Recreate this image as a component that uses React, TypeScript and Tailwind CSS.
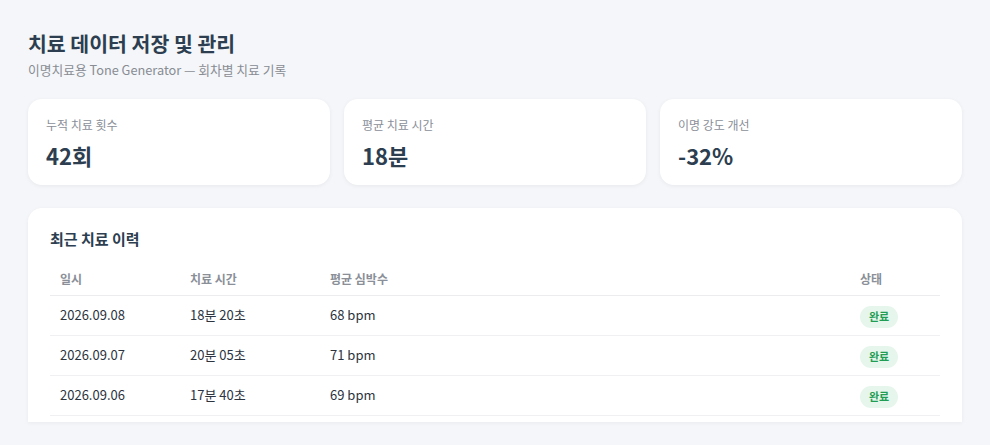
import React from 'react';

const stats = [
    { label: '누적 치료 횟수', value: '42회' },
    { label: '평균 치료 시간', value: '18분' },
    { label: '이명 강도 개선', value: '-32%' },
];

const history = [
    { date: '2026.09.08', duration: '18분 20초', bpm: '68 bpm', status: '완료' },
    { date: '2026.09.07', duration: '20분 05초', bpm: '71 bpm', status: '완료' },
    { date: '2026.09.06', duration: '17분 40초', bpm: '69 bpm', status: '완료' },
];

const StatCard: React.FC<{ label: string; value: string }> = ({ label, value }) => (
    <div className="bg-white rounded-[14px] shadow-[0_1px_4px_rgba(0,0,0,0.06)] px-[18px] pt-[17px] pb-[15px]">
        <div className="text-[12px] leading-[18px] text-[#8a8f98]">{label}</div>
        <div className="mt-[6px] text-[22px] leading-[30px] font-bold text-[#2c3e50]">{value}</div>
    </div>
);

export default function App() {
    return (
        <div
            className="h-[445px] overflow-hidden flex flex-col bg-[#f4f6f9] px-7 pt-[28px] pb-[23px]"
            style={{ fontFamily: '"Noto Sans CJK KR", "Noto Sans", sans-serif' }}
        >
            <h1 className="text-[20.5px] leading-[30px] font-bold text-[#2c3e50]">치료 데이터 저장 및 관리</h1>
            <p className="mt-[3px] text-[12.75px] leading-[18px] text-[#888c93]">이명치료용 Tone Generator — 회차별 치료 기록</p>

            <div className="mt-[20px] grid grid-cols-3 gap-[14px]">
                {stats.map(s => <StatCard key={s.label} label={s.label} value={s.value} />)}
            </div>

            <div className="mt-[23px] flex-1 overflow-hidden bg-white rounded-t-[14px] shadow-[0_1px_4px_rgba(0,0,0,0.05)] px-[22px] pt-[20px]">
                <h2 className="text-[15px] leading-[22px] font-bold text-[#2c3e50]">최근 치료 이력</h2>
                <table className="mt-[15px] w-full border-collapse text-left">
                    <thead>
                        <tr className="border-b border-[#ececee]">
                            <th className="w-[130px] px-[10px] h-[30px] pb-[2px] text-[12px] font-semibold text-[#8a8f98]">일시</th>
                            <th className="w-[140px] px-[10px] h-[30px] pb-[2px] text-[12px] font-semibold text-[#8a8f98]">치료 시간</th>
                            <th className="px-[10px] h-[30px] pb-[2px] text-[12px] font-semibold text-[#8a8f98]">평균 심박수</th>
                            <th className="w-[90px] px-[10px] h-[30px] pb-[2px] text-[12px] font-semibold text-[#8a8f98]">상태</th>
                        </tr>
                    </thead>
                    <tbody>
                        {history.map(row => (
                            <tr key={row.date} className="border-b border-[#f0f0f2]">
                                <td className="px-[10px] h-[40px] text-[13px] text-[#2c3440]">{row.date}</td>
                                <td className="px-[10px] h-[40px] text-[13px] text-[#2c3440]">{row.duration}</td>
                                <td className="px-[10px] h-[40px] text-[13px] text-[#2c3440]">{row.bpm}</td>
                                <td className="px-[10px] h-[40px]">
                                    <span className="inline-flex items-center h-[22px] px-[9px] rounded-full bg-[#e6f6ec] text-[11px] font-bold text-[#1f9d55]">
                                        {row.status}
                                    </span>
                                </td>
                            </tr>
                        ))}
                    </tbody>
                </table>
            </div>
        </div>
    );
}
